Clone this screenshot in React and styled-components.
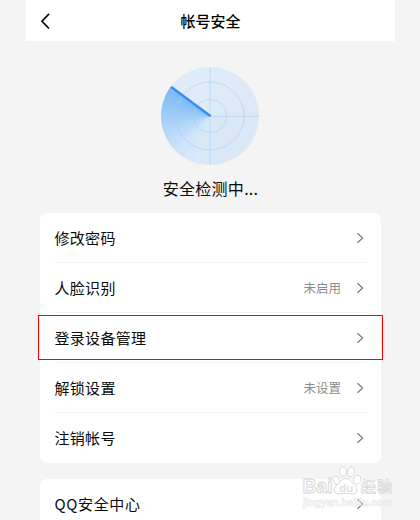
import React from "react";
import styled, { createGlobalStyle } from "styled-components";

const GlobalStyle = createGlobalStyle`
  * { box-sizing: border-box; }
  html, body { margin: 0; padding: 0; overflow: hidden; }
  body {
    background: #f4f4f4;
    font-family: "Noto Sans CJK SC", sans-serif;
    color: #0b0b0b;
  }
`;

const Page = styled.main`
  position: relative;
  width: 420px;
  height: 520px;
  padding: 0 25px 0 26px;
  overflow: hidden;
  background: #f4f4f4;
`;

const Header = styled.header`
  display: grid;
  grid-template-columns: 40px 1fr 40px;
  align-items: center;
  height: 41px;
  background: #fff;
`;

const BackButton = styled.button`
  display: flex;
  height: 41px;
  padding: 12px 0 0 13px;
  border: 0;
  background: none;
  color: #000;
`;

const Title = styled.h1`
  margin: 0;
  padding-top: 1px;
  font-size: 15px;
  line-height: 22px;
  font-weight: 500;
  text-align: center;
  color: #000;
`;

const Scan = styled.section`
  display: flex;
  flex-direction: column;
  align-items: center;
  height: 172px;
  padding-top: 26px;
`;

const Dial = styled.div`
  display: flex;
  width: 99px;
  height: 98px;
`;

const ScanText = styled.p`
  margin: 11px 0 0;
  font-size: 16px;
  line-height: 24px;
  letter-spacing: 0.3px;
`;

const Card = styled.ul`
  list-style: none;
  margin: 0 14px 16px;
  padding: 0 14px;
  border-radius: 7px;
  background: #fff;
`;

const Row = styled.li`
  position: relative;
  display: flex;
  align-items: center;
  height: 50px;
  padding: 0 3.5px 0 0.5px;
  border-bottom: 1px solid #f3f3f3;
  &:last-child { border-bottom-color: transparent; }
`;

const Label = styled.span`
  flex: 1;
  font-size: 15px;
  line-height: 22px;
  letter-spacing: ${(p) => (p.$wide ? "0.65px" : "0.3px")};
`;

const Status = styled.span`
  margin-right: 14.5px;
  font-size: 12.5px;
  line-height: 20px;
  color: #8b8b8b;
`;

const Highlight = styled.span`
  position: absolute;
  inset: 2px -16px 2px;
  border: 1px solid #ff0000;
`;

const Watermark = styled.svg`
  position: absolute;
  left: 298px;
  top: 462px;
`;

function Chevron() {
  return (
    <svg width="8" height="12" viewBox="0 0 8 12" fill="none">
      <path d="M1.5 1.2 6.6 6 1.5 10.8" stroke="#7c7c7c" strokeWidth="1.25" />
    </svg>
  );
}

function BackIcon() {
  return (
    <svg width="12" height="18" viewBox="0 0 12 18" fill="none">
      <path d="M10 1.9 3 9.2l7 7.3" stroke="currentColor" strokeWidth="1.65" />
    </svg>
  );
}

const SweepArea = styled.div`
  width: 98px;
  height: 98px;
  border-radius: 50%;
  background: conic-gradient(
    from 0deg,
    #dfebf7 0deg,
    #dae8f5 130deg,
    #dbe9f7 195deg,
    #cfe4f9 222deg,
    #abd2f8 260deg,
    #7cb9f7 307deg,
    #dfebf7 307.5deg,
    #dfebf7 360deg
  );
`;

function Radar() {
  return (
    <SweepArea>
      <svg width="98" height="98" viewBox="0 0 98 98" fill="none">
        <g stroke="#9fcdf4" strokeOpacity=".55">
          <circle cx="49" cy="49" r="16.5" />
          <circle cx="49" cy="49" r="34" />
          <path d="M49.2 0v98M0 49.3h98" />
        </g>
        <path d="M10.9 20.5 48.7 48.6" stroke="#398ef5" strokeWidth="2.5" strokeLinecap="round" />
      </svg>
    </SweepArea>
  );
}

function Item({ label, status, highlighted, wide }) {
  return (
    <Row>
      <Label $wide={wide}>{label}</Label>
      {status && <Status>{status}</Status>}
      <Chevron />
      {highlighted && <Highlight />}
    </Row>
  );
}

function BaiduMark() {
  return (
    <Watermark width="110" height="54" viewBox="0 0 110 54">
      <g fill="#fff" fillOpacity=".8" stroke="#d6d6d6" strokeWidth=".9">
        <text x="4.5" y="31" fontSize="20" fontWeight="700" textLength="30" lengthAdjust="spacingAndGlyphs" fontFamily="Liberation Sans, sans-serif">Bai</text>
        <ellipse cx="38.5" cy="18.3" rx="3" ry="4.3" transform="rotate(-15 38.5 18.3)" />
        <ellipse cx="45" cy="9.4" rx="3.5" ry="4.9" />
        <ellipse cx="53" cy="9.9" rx="3.4" ry="4.9" transform="rotate(12 53 9.9)" />
        <ellipse cx="59.2" cy="17.7" rx="3.5" ry="4.5" transform="rotate(15 59.2 17.7)" />
        <path d="M48 16.5c4 0 5.5 4 8.5 6.5 3.8 3.2 3.2 9-1.8 9-2.6 0-4-.7-7-.7-3 0-4.4.7-7 .7-5 0-5.8-5.8-1.8-9 3.3-2.6 5-6.5 9.1-6.5Z" />
        <text x="41.2" y="30" fontSize="11.5" fontWeight="700" fontFamily="Liberation Sans, sans-serif" fill="#d8d8d8" stroke="none">du</text>
        <text x="63" y="29.5" fontSize="15" fontWeight="700" textLength="31" fontFamily="Noto Sans CJK SC, sans-serif" strokeWidth=".75">经验</text>
      </g>
      <text x="5" y="43.5" fontSize="10.5" fontWeight="700" textLength="89" lengthAdjust="spacingAndGlyphs" fontFamily="Liberation Sans, sans-serif" fill="#fff" fillOpacity=".3" stroke="#e2e2e2" strokeOpacity=".8" strokeWidth=".7">jingyan.baidu.com</text>
    </Watermark>
  );
}

export default function App() {
  return (
    <>
      <GlobalStyle />
      <Page>
        <Header>
          <BackButton aria-label="返回"><BackIcon /></BackButton>
          <Title>帐号安全</Title>
        </Header>
        <Scan>
          <Dial><Radar /></Dial>
          <ScanText>安全检测中...</ScanText>
        </Scan>
        <Card>
          <Item label="修改密码" />
          <Item label="人脸识别" status="未启用" />
          <Item label="登录设备管理" highlighted />
          <Item label="解锁设置" status="未设置" />
          <Item label="注销帐号" />
        </Card>
        <Card>
          <Item label="QQ安全中心" wide />
        </Card>
        <BaiduMark />
      </Page>
    </>
  );
}
